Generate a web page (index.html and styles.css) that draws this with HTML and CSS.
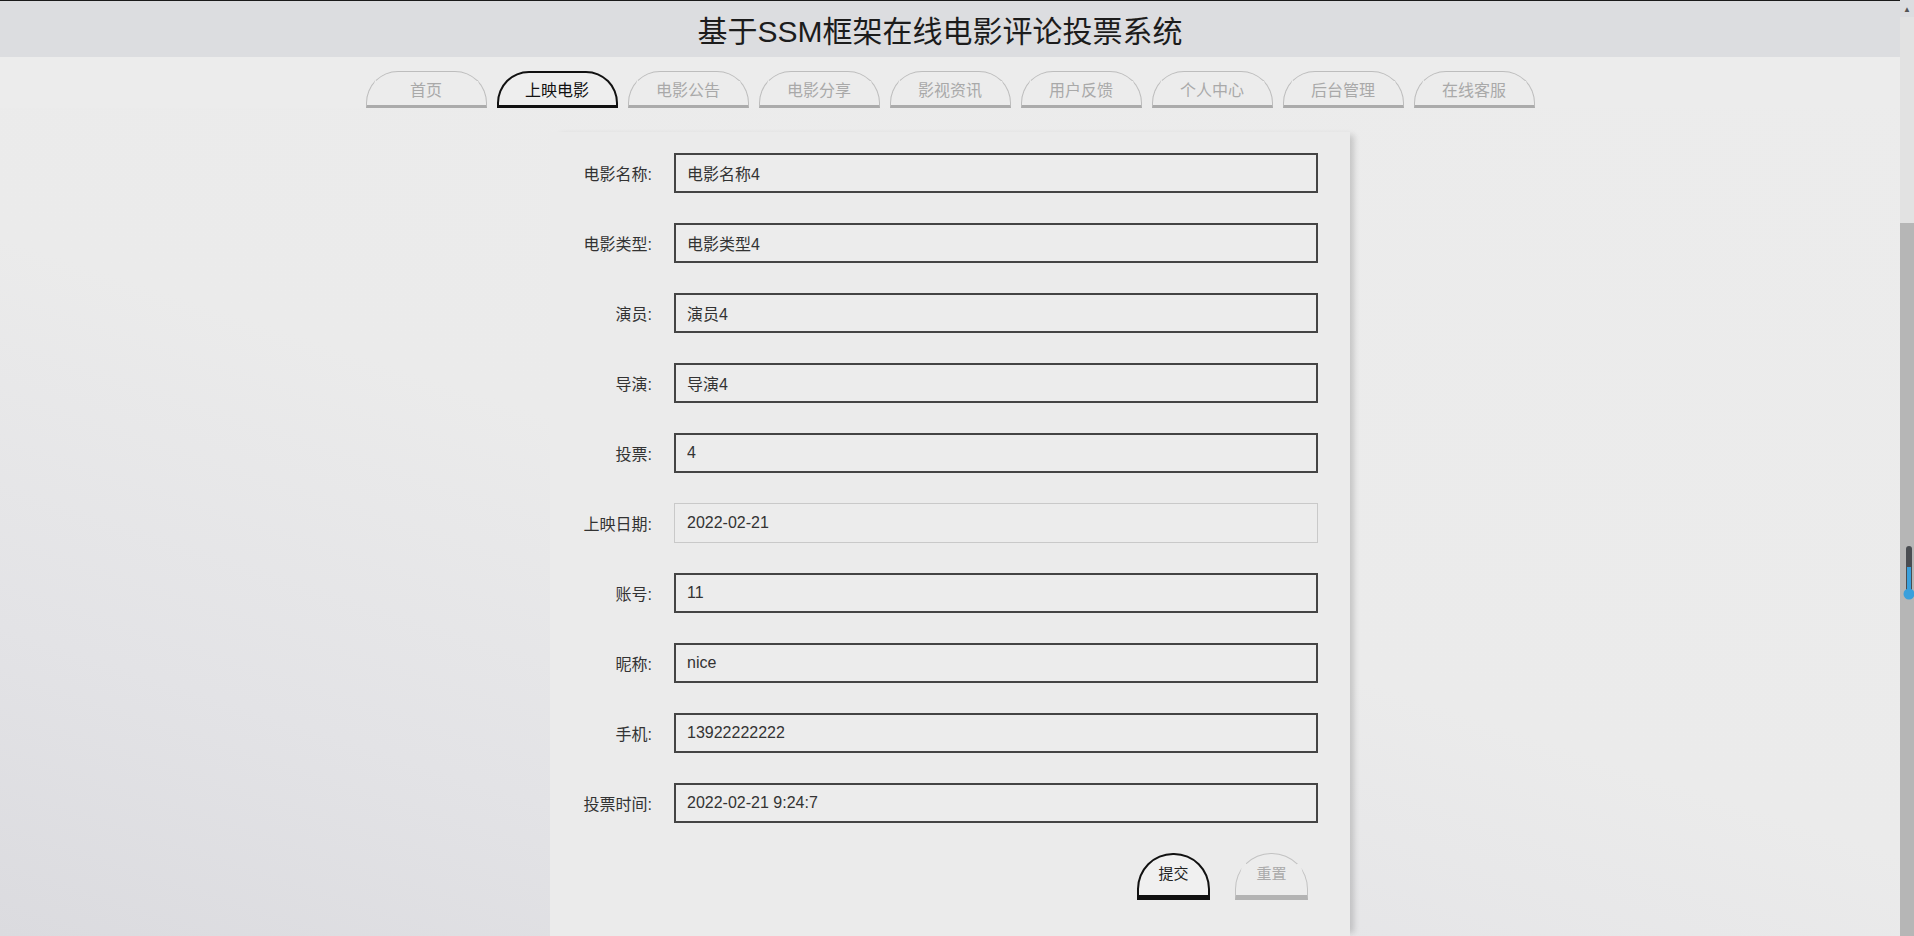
FILE: index.html
```html
<!DOCTYPE html>
<html lang="zh-CN">
<head>
  <meta charset="UTF-8">
  <meta name="viewport" content="width=device-width, initial-scale=1.0">
  <title>上映电影 - 基于SSM框架在线电影评论投票系统</title>
  <link rel="stylesheet" href="styles.css">
</head>
<body>

  <div class="pagina">
    <div class="principal">

      <div class="cabecera">
        <h1 class="titulo">基于SSM框架在线电影评论投票系统</h1>
      </div>

      <div class="menu">
        <a class="pestana">首页</a>
        <a class="pestana activa">上映电影</a>
        <a class="pestana">电影公告</a>
        <a class="pestana">电影分享</a>
        <a class="pestana">影视资讯</a>
        <a class="pestana">用户反馈</a>
        <a class="pestana">个人中心</a>
        <a class="pestana">后台管理</a>
        <a class="pestana">在线客服</a>
      </div>

      <div class="panel">
        <form class="formulario">
          <label class="etiqueta">电影名称:</label>
          <input class="campo" type="text" value="电影名称4">

          <label class="etiqueta">电影类型:</label>
          <input class="campo" type="text" value="电影类型4">

          <label class="etiqueta">演员:</label>
          <input class="campo" type="text" value="演员4">

          <label class="etiqueta">导演:</label>
          <input class="campo" type="text" value="导演4">

          <label class="etiqueta">投票:</label>
          <input class="campo" type="text" value="4">

          <label class="etiqueta">上映日期:</label>
          <input class="campo fecha" type="text" value="2022-02-21" readonly>

          <label class="etiqueta">账号:</label>
          <input class="campo" type="text" value="11">

          <label class="etiqueta">昵称:</label>
          <input class="campo" type="text" value="nice">

          <label class="etiqueta">手机:</label>
          <input class="campo" type="text" value="13922222222">

          <label class="etiqueta">投票时间:</label>
          <input class="campo" type="text" value="2022-02-21 9:24:7">

          <div class="botones">
            <button class="boton enviar" type="button">提交</button>
            <button class="boton" type="reset">重置</button>
          </div>
        </form>
      </div>

    </div>

    <!-- barra de desplazamiento -->
    <div class="barra">
      <div class="flecha">&#9650;</div>
      <div class="pista"></div>
      <div class="pulgar">
        <svg class="termometro" width="12" height="56" viewBox="0 0 12 56">
          <rect x="3" y="1" width="6" height="46" rx="3" fill="#4a4d52"/>
          <rect x="4" y="22" width="4" height="26" fill="#3aa0dc"/>
          <circle cx="6" cy="49" r="5.5" fill="#3aa0dc"/>
        </svg>
      </div>
    </div>
  </div>

</body>
</html>
```

FILE: styles.css
```css
body {
  margin: 0;
  font-family: 'Liberation Sans', 'Noto Sans CJK SC', sans-serif;
  color: #333;
  overflow: hidden;
}

.pagina {
  display: flex;
  height: 936px;
}

.principal {
  flex: 1;
  display: flex;
  flex-direction: column;
  overflow: hidden;
  background: linear-gradient(198deg, #ececec 0%, #ebebeb 55%, #e3e3e6 80%, #dbdbdf 100%);
}

.cabecera {
  height: 56px;
  border-top: 1px solid #1a1a1a;
  background-color: #dcdde0;
  display: flex;
  align-items: center;
  justify-content: center;
}

.titulo {
  margin: 0;
  font-size: 30px;
  font-weight: normal;
  color: #1c1c1c;
  padding-right: 20px;
}

.menu {
  display: flex;
  justify-content: center;
  gap: 10px;
  padding-top: 14px;
  background-color: #ececec;
}

.pestana {
  box-sizing: border-box;
  width: 121px;
  height: 37px;
  border: 1px solid #bdbdbd;
  border-bottom: 3px solid #ababab;
  border-radius: 32px 32px 0 0;
  display: flex;
  align-items: center;
  justify-content: center;
  font-size: 16px;
  color: #a9a9a9;
  cursor: pointer;
}

.pestana.activa {
  border: 2px solid #111;
  border-bottom: 3px solid #111;
  color: #111;
  background-color: #eeeeee;
}

.panel {
  flex: 1;
  width: 800px;
  margin: 24px auto 0;
  padding-top: 21px;
  background-color: #ebebeb;
  box-shadow: 7px 0 6px -3px rgba(0, 0, 0, 0.16);
}

.formulario {
  display: grid;
  grid-template-columns: 102px 1fr;
  column-gap: 22px;
  row-gap: 30px;
  padding-right: 32px;
  align-items: center;
}

.etiqueta {
  text-align: right;
  font-size: 16px;
  color: #333;
}

.campo {
  box-sizing: border-box;
  height: 40px;
  padding: 0 11px;
  border: 2px solid #444;
  background-color: #ececec;
  font-family: 'Liberation Sans', 'Noto Sans CJK SC', sans-serif;
  font-size: 16px;
  color: #333;
  outline: none;
}

.campo.fecha {
  border: 1px solid #c9c9c9;
  padding-left: 12px;
}

.botones {
  grid-column: 1 / 3;
  display: flex;
  justify-content: flex-end;
  gap: 25px;
  padding-right: 10px;
}

.boton {
  box-sizing: border-box;
  width: 73px;
  height: 47px;
  padding: 0 0 5px;
  border: 1px solid #c2c2c2;
  border-bottom: 5px solid #b3b3b3;
  border-radius: 36px 36px 0 0;
  background-color: #ececec;
  font-family: 'Liberation Sans', 'Noto Sans CJK SC', sans-serif;
  font-size: 15px;
  color: #aaa;
  cursor: pointer;
}

.boton.enviar {
  border: 2px solid #111;
  border-bottom: 5px solid #111;
  color: #222;
  background-color: #f0f0f0;
}

.barra {
  width: 14px;
  display: flex;
  flex-direction: column;
  background-color: #e2e2e2;
}

.flecha {
  height: 17px;
  font-size: 8px;
  line-height: 20px;
  text-align: center;
  color: #555;
  background-color: #dcdde0;
}

.pista {
  height: 206px;
}

.pulgar {
  flex: 1;
  position: relative;
  background-color: #b6b6b6;
}

.termometro {
  position: absolute;
  left: 3px;
  top: 322px;
}
```
